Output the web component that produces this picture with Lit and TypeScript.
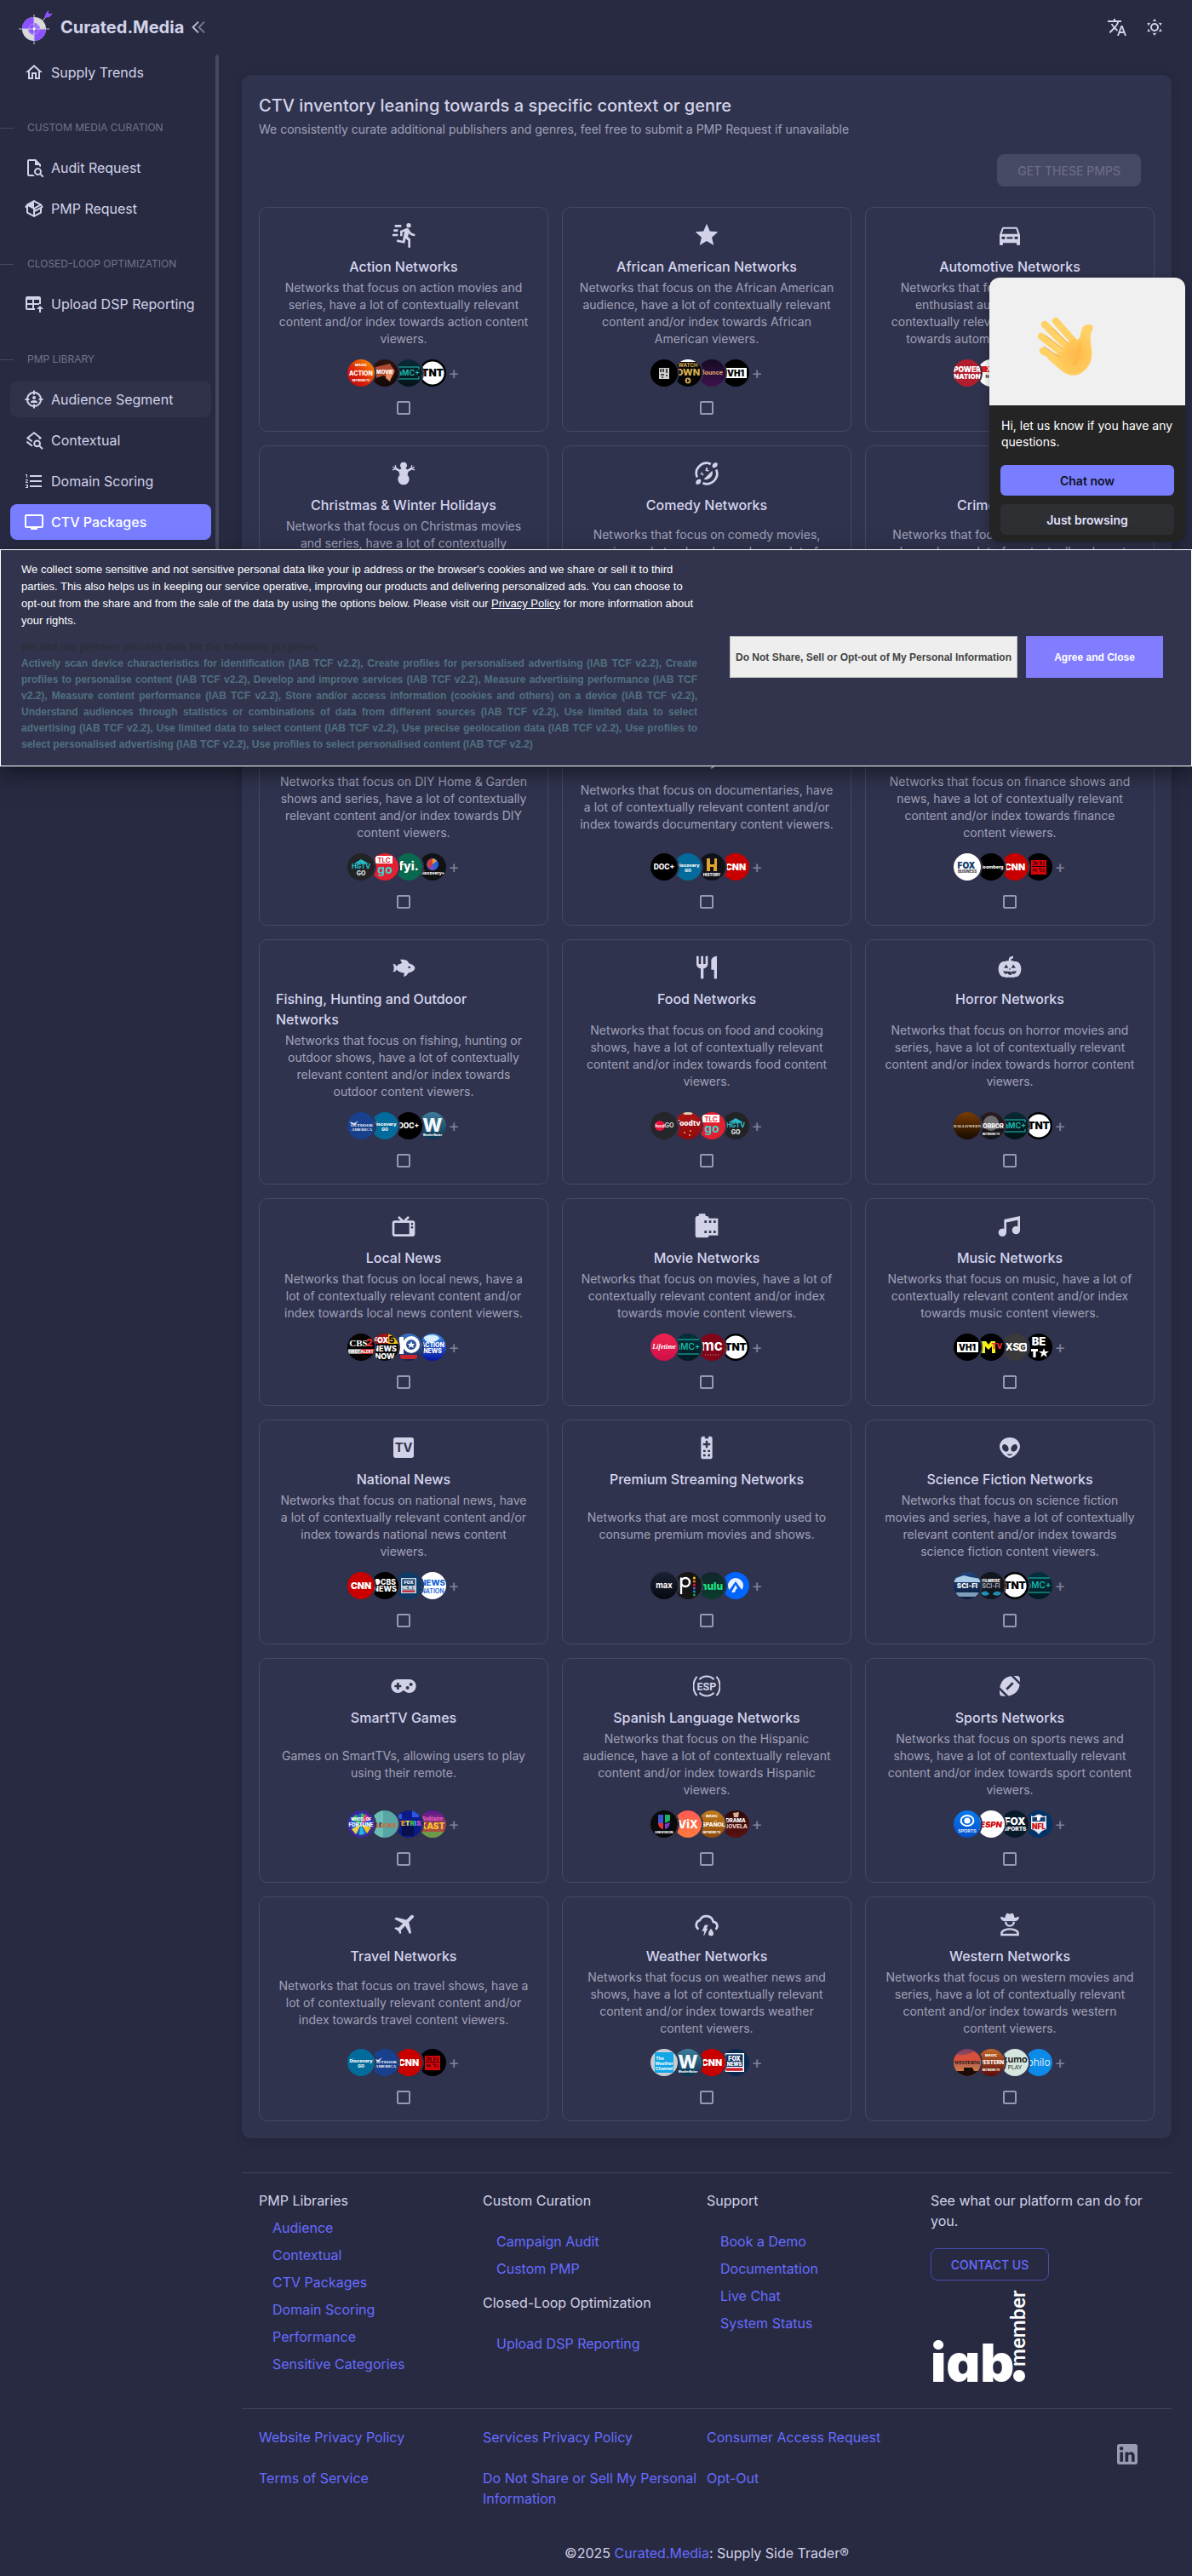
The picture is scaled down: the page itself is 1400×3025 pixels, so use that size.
import { LitElement, html, svg, css, type TemplateResult, type SVGTemplateResult } from "lit";
import { customElement, property } from "lit/decorators.js";
import { classMap } from "lit/directives/class-map.js";

type Art = SVGTemplateResult;

/* ---------- icons, all on a 24-unit grid ---------- */

const ICONS: Record<string, Art> = {
  home: svg`<path d="M12 5.69L17 10.19V18H15V12H9V18H7V10.19L12 5.69M12 3L2 12H5V20H11V14H13V20H19V12H22L12 3Z"/>`,
  audit: svg`<path d="M14,2H6A2,2 0 0,0 4,4V20A2,2 0 0,0 6,22H13C12.59,21.75 12.2,21.44 11.86,21.1C11.53,20.77 11.25,20.4 11,20H6V4H13V9H18V10.18C18.71,10.34 19.39,10.61 20,11V8L14,2M20.31,18.9C21.64,16.79 21,14 18.91,12.68C16.8,11.35 14,12 12.69,14.08C11.35,16.19 12,18.97 14.09,20.3C15.55,21.23 17.41,21.23 18.88,20.32L22,23.39L23.39,22L20.31,18.9M16.5,19A2.5,2.5 0 0,1 14,16.5A2.5,2.5 0 0,1 16.5,14A2.5,2.5 0 0,1 19,16.5A2.5,2.5 0 0,1 16.5,19Z"/>`,
  box: svg`<path d="M2,10.96C1.5,10.68 1.35,10.07 1.63,9.59L3.13,7C3.24,6.8 3.41,6.66 3.6,6.58L11.43,2.18C11.59,2.06 11.79,2 12,2C12.21,2 12.41,2.06 12.57,2.18L20.47,6.62C20.66,6.72 20.82,6.88 20.91,7.08L22.36,9.6C22.64,10.08 22.47,10.69 22,10.96L21,11.54V16.5C21,16.88 20.79,17.21 20.47,17.38L12.57,21.82C12.41,21.94 12.21,22 12,22C11.79,22 11.59,21.94 11.43,21.82L3.53,17.38C3.21,17.21 3,16.88 3,16.5V10.96C2.7,11.13 2.32,11.14 2,10.96M12,4.15V10.85L17.96,7.5L12,4.15M5,15.91L11,19.29V12.58L5,9.21V15.91M19,15.91V12.69L14,15.59C13.67,15.77 13.3,15.76 13,15.6V19.29L19,15.91M13.85,13.36L20.13,9.73L19.55,8.72L13.27,12.35L13.85,13.36Z"/>`,
  tableUp: svg`<path d="M4 3H18A2 2 0 0 1 20 5V12.2A6 6 0 0 0 18 12V13H12V17H13.1A6 6 0 0 0 13.1 19H4A2 2 0 0 1 2 17V5A2 2 0 0 1 4 3M4 7V11H10V7H4M12 7V11H18V7H12M4 13V17H10V13H4Z"/><path d="M19 14L23 18H20V22H18V18H15Z"/>`,
  target: svg`<path d="M20.95,11H22.5V13H20.95C20.5,17.17 17.17,20.5 13,20.95V22.5H11V20.95C6.83,20.5 3.5,17.17 3.05,13H1.5V11H3.05C3.5,6.83 6.83,3.5 11,3.05V1.5H13V3.05C17.17,3.5 20.5,6.83 20.95,11M5.07,11H6.5V13H5.07C5.5,16.07 7.93,18.5 11,18.93V17.5H13V18.93C16.07,18.5 18.5,16.07 18.93,13H17.5V11H18.93C18.5,7.93 16.07,5.5 13,5.07V6.5H11V5.07C7.93,5.5 5.5,7.93 5.07,11M16,16H8V15C8,13.67 10.67,13 12,13C13.33,13 16,13.67 16,15V16M12,8A2,2 0 0,1 14,10A2,2 0 0,1 12,12A2,2 0 0,1 10,10A2,2 0 0,1 12,8Z"/>`,
  layers: svg`<g fill="none" stroke="currentColor" stroke-width="2"><path d="M9.6 13.4L4.4 9.2L12 3.3L19.6 9.2L18 10.5"/><path d="M3.4 13.6L10 18.8"/><circle cx="15.6" cy="15.8" r="3.4"/><path d="M18 18.3L22 22.2"/></g>`,
  numbers: svg`<path d="M7,13V11H21V13H7M7,19V17H21V19H7M7,7V5H21V7H7M3,8V5H2V4H4V8H3M2,17V16H5V20H2V19H4V18.5H3V17.5H4V17H2M4.25,10A0.75,0.75 0 0,1 5,10.75C5,10.95 4.92,11.14 4.79,11.27L3.12,13H5V14H2V13.08L4,11H2V10H4.25Z"/>`,
  tv: svg`<path d="M21,17H3V5H21M21,3H3A2,2 0 0,0 1,5V17A2,2 0 0,0 3,19H8V21H16V19H21A2,2 0 0,0 23,17V5A2,2 0 0,0 21,3Z"/>`,
  translate: svg`<path d="M12.87,15.07L10.33,12.56L10.36,12.53C12.1,10.59 13.34,8.36 14.07,6H17V4H10V2H8V4H1V6H12.17C11.5,7.92 10.44,9.75 9,11.35C8.07,10.32 7.3,9.19 6.69,8H4.69C5.42,9.63 6.42,11.17 7.67,12.56L2.58,17.58L4,19L9,14L12.11,17.11L12.87,15.07M18.5,10H16.5L12,22H14L15.12,19H19.87L21,22H23L18.5,10M15.88,17L17.5,12.67L19.12,17H15.88Z"/>`,
  sun: svg`<path d="M12,7A5,5 0 0,1 17,12A5,5 0 0,1 12,17A5,5 0 0,1 7,12A5,5 0 0,1 12,7M12,9A3,3 0 0,0 9,12A3,3 0 0,0 12,15A3,3 0 0,0 15,12A3,3 0 0,0 12,9M12,2L14.39,5.42C13.65,5.15 12.84,5 12,5C11.16,5 10.35,5.15 9.61,5.42L12,2M3.34,7L7.5,6.65C6.9,7.16 6.36,7.78 5.94,8.5C5.5,9.24 5.25,10 5.11,10.79L3.34,7M3.36,17L5.12,13.23C5.26,14 5.53,14.78 5.95,15.5C6.37,16.24 6.91,16.86 7.5,17.37L3.36,17M20.65,7L18.88,10.79C18.74,10 18.47,9.23 18.05,8.5C17.63,7.78 17.1,7.15 16.5,6.64L20.65,7M20.64,17L16.5,17.36C17.09,16.85 17.62,16.22 18.04,15.5C18.46,14.77 18.73,14 18.87,13.21L20.64,17M12,22L9.59,18.56C10.33,18.83 11.14,19 12,19C12.82,19 13.63,18.83 14.37,18.56L12,22Z"/>`,
  chevrons: svg`<g fill="none" stroke="currentColor" stroke-width="2"><path d="M12 5.6L5.6 12L12 18.4"/><path d="M19 5.6L12.6 12L19 18.4" opacity=".55"/></g>`,
  run: svg`<path d="M16.5,5.5A2,2 0 0,0 18.5,3.5A2,2 0 0,0 16.5,1.5A2,2 0 0,0 14.5,3.5A2,2 0 0,0 16.5,5.5M12.9,19.4L13.9,15L16,17V23H18V15.5L15.9,13.5L16.5,10.5C17.89,12.09 19.89,13 22,13V11C20.24,11.03 18.6,10.11 17.7,8.6L16.7,7C16.34,6.4 15.7,6 15,6C14.7,6 14.5,6.1 14.2,6.1L9,8.3V13H11V9.6L12.8,8.9L11.2,17L6.3,16L5.9,18L12.9,19.4M4,9A1,1 0 0,1 3,8A1,1 0 0,1 4,7H7V9H4M5,5A1,1 0 0,1 4,4A1,1 0 0,1 5,3H10V5H5M3,13A1,1 0 0,1 2,12A1,1 0 0,1 3,11H7V13H3Z"/>`,
  star: svg`<path d="M12,17.27L18.18,21L16.54,13.97L22,9.24L14.81,8.62L12,2L9.19,8.62L2,9.24L7.45,13.97L5.82,21L12,17.27Z"/>`,
  car: svg`<path fill-rule="evenodd" d="M5,11L6.5,6.5H17.5L19,11M8 14.5A1.2 1.2 0 0 1 6.8 15.7H5.9A1.2 1.2 0 0 1 5.9 13.3H6.8A1.2 1.2 0 0 1 8 14.5M19.3 14.5A1.2 1.2 0 0 1 18.1 15.7H17.2A1.2 1.2 0 0 1 17.2 13.3H18.1A1.2 1.2 0 0 1 19.3 14.5M9.4 13.6H14.6V15.4H9.4M18.92,6C18.72,5.42 18.16,5 17.5,5H6.5C5.84,5 5.28,5.42 5.08,6L3,12V20A1,1 0 0,0 4,21H5A1,1 0 0,0 6,20V19H18V20A1,1 0 0,0 19,21H20A1,1 0 0,0 21,20V12L18.92,6Z"/>`,
  snowman: svg`<path d="M17,17A5,5 0 0,1 12,22A5,5 0 0,1 7,17C7,15.5 7.65,14.17 8.69,13.25C8.26,12.61 8,11.83 8,11V10.59L5.04,8.87L4.83,8.71L2.29,9.39L2.03,8.43L4.24,7.84L2.26,6.69L2.76,5.82L4.74,6.97L4.15,4.75L5.11,4.5L5.8,7.04L6.04,7.14L8.73,8.69C9.11,8.15 9.62,7.71 10.22,7.42C9.5,6.87 9,6 9,5A3,3 0 0,1 12,2A3,3 0 0,1 15,5C15,6 14.5,6.87 13.78,7.42C14.38,7.71 14.89,8.15 15.27,8.69L17.96,7.14L18.2,7.04L18.89,4.5L19.85,4.75L19.26,6.97L21.24,5.82L21.74,6.69L19.76,7.84L21.97,8.43L21.71,9.39L19.17,8.71L18.96,8.87L16,10.59V11C16,11.83 15.74,12.61 15.31,13.25C16.35,14.17 17,15.5 17,17Z"/>`,
  laugh: svg`<g fill="none" stroke="currentColor" stroke-width="2"><path d="M3.6 15.4A9 9 0 0 1 15.6 3.7M20.4 8.6A9 9 0 0 1 8.6 20.4"/></g><path d="M16.9 9.6A6 6 0 0 1 9.4 17.1ZM17.2 6.8C16.6 4.6 17.6 2.6 20 2.4C21.2 2.4 21.7 3 21.6 4C21.4 6.4 19.4 7.4 17.2 6.8M6.8 17.2C4.6 16.6 2.6 17.6 2.4 20C2.4 21.2 3 21.7 4 21.6C6.4 21.4 7.4 19.4 6.8 17.2M6.5 13L6.9 11.2L8.7 10.8L7.4 12L9.4 12.4L8.6 14.2L8 13ZM11.6 6.6L13 7.4L12.6 9.2L14.4 9L13.2 10.4L10.8 9.6Z"/>`,
  shield: svg`<path d="M12 2L20 5V11C20 16.2 16.6 20.6 12 22C7.4 20.6 4 16.2 4 11V5Z"/>`,
  hammer: svg`<path d="M3 8L9 3H15L14 6L12 7L21 18L18 21L8 11L6 12Z"/>`,
  camera: svg`<path d="M3 6H15A1 1 0 0 1 16 7V10L21 6V18L16 14V17A1 1 0 0 1 15 18H3A1 1 0 0 1 2 17V7A1 1 0 0 1 3 6Z"/>`,
  chart: svg`<path d="M4 19H20V21H4ZM5 11H8V17H5ZM10.5 7H13.5V17H10.5ZM16 3H19V17H16Z"/>`,
  fish: svg`<path d="M12,20L12.76,17C9.5,16.79 6.59,15.4 5.75,13.58C5.66,14.06 5.53,14.5 5.33,14.83C4.67,16 3.33,16 2,16C3.1,16 3.5,14.43 3.5,12.5C3.5,10.57 3.1,9 2,9C3.33,9 4.67,9 5.33,10.17C5.53,10.5 5.66,10.94 5.75,11.42C6.4,10 8.32,8.85 10.66,8.32L9,5C11,5 13,5 14.33,5.67C15.46,6.23 16.11,7.27 16.69,8.38C19.61,9.08 22,10.66 22,12.5C22,14.38 19.5,16 16.5,16.66C15.67,17.76 14.86,18.78 14.17,19.33C13.33,20 12.67,20 12,20M17,11A1,1 0 0,0 16,12A1,1 0 0,0 17,13A1,1 0 0,0 18,12A1,1 0 0,0 17,11Z"/>`,
  food: svg`<path d="M11,9H9V2H7V9H5V2H3V9C3,11.12 4.66,12.84 6.75,12.97V22H9.25V12.97C11.34,12.84 13,11.12 13,9V2H11V9M16,6V14H18.5V22H21V2C18.24,2 16,4.24 16,6Z"/>`,
  pumpkin: svg`<path fill-rule="evenodd" d="M11 6.2C11.1 4.6 11.1 3.4 12.4 2.6L15 2V4L13.2 4.5V6.2C14.2 6 15.4 6.2 16.4 6.8C19.6 6.2 22 9.4 22 13.4C22 17.6 19.8 20.8 16.6 20.4C15.4 21 14.2 21.1 13.2 20.7C12.4 21 11.4 21 10.8 20.7C9.8 21.1 8.6 21 7.4 20.4C4.2 20.8 2 17.6 2 13.4C2 9.4 4.4 6.2 7.6 6.8C8.8 6.2 10 6 11 6.2ZM9 9.4L6.8 12.6H10.6ZM15 9.4L13.4 12.6H17.2ZM12 12.4L11.2 13.9H12.8ZM6 14.6L7.2 17.2L9 18L9.8 16.8L11.2 18.5H13.4L14.4 17L15.6 18L17 17L18 14.6L16.2 15.6L14.6 15.2L13.4 16.4L11.6 15.4L10.4 15.8L9 15.2L8 15.8Z"/>`,
  tvClassic: svg`<path d="M8.16,3L6.75,4.41L9.34,7H4C2.89,7 2,7.89 2,9V19C2,20.11 2.89,21 4,21H20C21.11,21 22,20.11 22,19V9C22,7.89 21.11,7 20,7H14.66L17.25,4.41L15.84,3L12,6.84L8.16,3M4,9H17V19H4V9M19.5,9A1,1 0 0,1 20.5,10A1,1 0 0,1 19.5,11A1,1 0 0,1 18.5,10A1,1 0 0,1 19.5,9M19.5,12A1,1 0 0,1 20.5,13A1,1 0 0,1 19.5,14A1,1 0 0,1 18.5,13A1,1 0 0,1 19.5,12Z"/>`,
  film: svg`<path d="M14 5c0-1.1-.9-2-2-2h-1V2c0-.55-.45-1-1-1H6c-.55 0-1 .45-1 1v1H4c-1.1 0-2 .9-2 2v15c0 1.1.9 2 2 2h8c1.1 0 2-.9 2-2h8V5h-8zm-2 13h-2v-2h2v2zm0-9h-2V7h2v2zm4 9h-2v-2h2v2zm0-9h-2V7h2v2zm4 9h-2v-2h2v2zm0-9h-2V7h2v2z"/>`,
  music: svg`<path d="M21,3V15.5A3.5,3.5 0 0,1 17.5,19A3.5,3.5 0 0,1 14,15.5A3.5,3.5 0 0,1 17.5,12C18.04,12 18.55,12.12 19,12.34V6.47L9,8.6V17.5A3.5,3.5 0 0,1 5.5,21A3.5,3.5 0 0,1 2,17.5A3.5,3.5 0 0,1 5.5,14C6.04,14 6.55,14.12 7,14.34V6L21,3Z"/>`,
  tvBox: svg`<rect x="3" y="3" width="18" height="18" rx="2"/><text x="12" y="16" text-anchor="middle" font-family="Inter, sans-serif" font-weight="700" font-size="11" fill="#30334e">TV</text>`,
  remote: svg`<path fill-rule="evenodd" d="M9 2H10.4V4H13.6V2H15A2 2 0 0 1 17 4V20A2 2 0 0 1 15 22H9A2 2 0 0 1 7 20V4A2 2 0 0 1 9 2ZM11.1 5.8V8.1H8.8V9.9H11.1V12.2H12.9V9.9H15.2V8.1H12.9V5.8ZM9 14V15.8H11V14ZM13 14V15.8H15V14ZM9 17.8V19.6H11V17.8ZM13 17.8V19.6H15V17.8Z"/>`,
  alien: svg`<path d="M12,3C16.97,3 21,6.58 21,11C21,15.42 15,21 12,21C9,21 3,15.42 3,11C3,6.58 7.03,3 12,3M10.31,10.93C9.29,9.29 7.47,8.58 6.25,9.34C5.03,10.1 4.87,12.05 5.89,13.69C6.92,15.33 8.74,16.04 9.96,15.28C11.18,14.5 11.33,12.57 10.31,10.93M13.69,10.93C12.67,12.57 12.82,14.5 14.04,15.28C15.26,16.04 17.08,15.33 18.11,13.69C19.13,12.05 18.97,10.1 17.75,9.34C16.53,8.58 14.71,9.29 13.69,10.93M12,17.75C10,17.75 9.5,17 9.5,17C9.5,17.03 10,19 12,19C14,19 14.5,17 14.5,17C14.5,17 14,17.75 12,17.75Z"/>`,
  gamepad: svg`<path d="M7,6H17A6,6 0 0,1 23,12A6,6 0 0,1 17,18C15.22,18 13.63,17.23 12.53,16H11.47C10.37,17.23 8.78,18 7,18A6,6 0 0,1 1,12A6,6 0 0,1 7,6M6,9V11H4V13H6V15H8V13H10V11H8V9H6M15.5,12A1.5,1.5 0 0,0 14,13.5A1.5,1.5 0 0,0 15.5,15A1.5,1.5 0 0,0 17,13.5A1.5,1.5 0 0,0 15.5,12M18.5,9A1.5,1.5 0 0,0 17,10.5A1.5,1.5 0 0,0 18.5,12A1.5,1.5 0 0,0 20,10.5A1.5,1.5 0 0,0 18.5,9Z"/>`,
  esp: svg`<g fill="none" stroke="currentColor" stroke-width="1.5"><path d="M5.6 6.2A8.8 8.8 0 0 1 18.4 6.2M5.6 17.8A8.8 8.8 0 0 0 18.4 17.8"/><path d="M3.4 3.6A13 13 0 0 0 3.4 20.4M20.6 3.6A13 13 0 0 1 20.6 20.4"/></g><text x="12" y="15.4" text-anchor="middle" font-family="Roboto, sans-serif" font-weight="700" font-size="9.4">ESP</text>`,
  football: svg`<path d="M3.02 15.62c-.08 2.42.32 4.34.67 4.69s2.28.76 4.69.67l-5.36-5.36zM13.08 3.28C10.75 3.7 8.29 4.62 6.46 6.46s-2.76 4.29-3.18 6.62l7.63 7.63c2.34-.41 4.79-1.34 6.62-3.18s2.76-4.29 3.18-6.62l-7.63-7.63zM9.9 15.5l-1.4-1.4 5.6-5.6 1.4 1.4-5.6 5.6zM20.98 8.38c.08-2.42-.32-4.34-.67-4.69s-2.28-.76-4.69-.67l5.36 5.36z"/>`,
  plane: svg`<path d="M20.56 3.91C21.15 4.5 21.15 5.45 20.56 6.03L16.67 9.92L18.79 19.11L17.38 20.53L13.5 13.1L9.6 17L9.96 19.47L8.89 20.53L7.13 17.35L3.94 15.58L5 14.5L7.5 14.87L11.37 11L3.94 7.09L5.36 5.68L14.55 7.8L18.44 3.91C19 3.33 20 3.33 20.56 3.91Z"/>`,
  weather: svg`<path fill="none" stroke="currentColor" stroke-width="2" stroke-linecap="round" d="M4.2 15.6A4.3 4.3 0 0 1 5.9 8.3A6.3 6.3 0 0 1 17.8 9.6A3.6 3.6 0 0 1 20.4 15.6"/><path d="M10.4 12.4H13.4L11.8 15.6H13L9.2 22.6L9.9 17.8H7.8ZM15.8 15.6C17.2 17.4 18 18.6 18 19.8A2.2 2.2 0 0 1 13.6 19.8C13.6 18.6 14.4 17.4 15.8 15.6Z"/>`,
  cowboy: svg`<path d="M4 5C5.4 4.8 5.6 5.8 7.8 6C8.2 4 8.6 2 10.2 2C11 2 11.3 2.6 12 2.6C12.7 2.6 13 2 13.8 2C15.4 2 15.8 4 16.2 6C18.4 5.8 18.6 4.8 20 5C20.4 7.4 18.6 9 16 9H8C5.4 9 3.6 7.4 4 5Z"/><g fill="none" stroke="currentColor" stroke-width="1.8"><path d="M8.4 9.6A3.6 3.6 0 0 0 15.6 9.6"/><path d="M4.8 21V19.6C4.8 17.4 8.6 16 12 16C15.4 16 19.2 17.4 19.2 19.6V21Z"/></g>`,
  linkedin: svg`<path d="M19 3A2 2 0 0 1 21 5V19A2 2 0 0 1 19 21H5A2 2 0 0 1 3 19V5A2 2 0 0 1 5 3H19M18.5 18.5V13.2A3.26 3.26 0 0 0 15.24 9.94C14.39 9.94 13.4 10.46 12.92 11.24V10.13H10.13V18.5H12.92V13.57C12.92 12.8 13.54 12.17 14.31 12.17A1.4 1.4 0 0 1 15.71 13.57V18.5H18.5M6.88 8.56A1.68 1.68 0 0 0 8.56 6.88C8.56 5.95 7.81 5.19 6.88 5.19A1.69 1.69 0 0 0 5.19 6.88C5.19 7.81 5.95 8.56 6.88 8.56M8.27 18.5V10.13H5.5V18.5H8.27Z"/>`,
};

const icon = (name: string, cls = "icon"): TemplateResult =>
  html`<svg class=${cls} viewBox="0 0 24 24" fill="currentColor" aria-hidden="true">${ICONS[name]}</svg>`;

/* ---------- channel badges, 32-unit discs ---------- */

const SANS = "Inter, sans-serif";
const SERIF = "'Liberation Serif', serif";

const word = (s: string, y: number, size: number, fill = "#fff", weight = 800, x = 16, family = SANS): Art =>
  svg`<text x=${x} y=${y} font-size=${size} fill=${fill} font-weight=${weight} font-family=${family} text-anchor="middle">${s}</text>`;
const ground = (fill: string): Art => svg`<rect width="32" height="32" fill=${fill}/>`;
const blend = (id: string, a: string, b: string): Art =>
  svg`<linearGradient id=${id} x2="0" y2="1"><stop stop-color=${a}/><stop offset="1" stop-color=${b}/></linearGradient><rect width="32" height="32" fill=${`url(#${id})`}/>`;

const BADGES: Record<string, Art> = {
  action: svg`<linearGradient id="g" x1="1" x2="0" y2="1"><stop stop-color="#ff9a00"/><stop offset=".6" stop-color="#d8200c"/><stop offset="1" stop-color="#b8040c"/></linearGradient><rect width="32" height="32" fill="url(#g)"/>${word("MAGIC", 8, 4)}${word("ACTION", 19, 7)}${word("NETWORK TV", 26, 3)}`,
  action2: svg`${blend("g", "#2c1410", "#120806")}<path d="M5 9L22 5L28 14L24 22L14 19L6 22Z" fill="#b04a32"/><path d="M18 13L27 12L22 26L17 22Z" fill="#e88a5c"/>${word("MOVIE", 17, 6)}`,
  amc: svg`${blend("g", "#0a2a36", "#031218")}<path d="M2 9H28V12M2 23H28V20" fill="none" stroke="#1fc4b4"/>${word("aMC+", 19, 9, "#1fc4b4", 600)}`,
  tnt: svg`${ground("#000")}<circle cx="16" cy="16" r="13.6" fill="#fff"/>${word("TNT", 20, 12, "#000", 900)}`,
  square: svg`${ground("#000")}<rect x="10" y="10" width="12" height="13" fill="#cfcfcf"/><path d="M12 11V15M15 11V15M19 11V16M12 18H16M18 19H20M13 21H15" stroke="#222" stroke-width="1.6"/>`,
  own: svg`${ground("#050505")}<path d="M4 0H28V3H4Z" fill="#fff"/>${word("WATCH", 9, 6, "#c9a04a")}${word("OWN", 19, 11, "#d8b052")}<circle cx="16" cy="25" r="3.4" fill="#c9a04a"/><path d="M15 23V27L18 25Z" fill="#050505"/>`,
  bounce: svg`${blend("g", "#160a24", "#3d124e")}${word("Bounce", 18, 7, "#e0a868", 700)}`,
  vh1: svg`${ground("#000")}<rect x="4" y="10" width="25" height="12" fill="#fff"/>${word("VH1", 20, 10, "#000", 900)}`,
  power: svg`${ground("#b01e2e")}${word("POWER", 15, 8.6, "#fff", 900)}${word("NATION", 22.6, 8, "#fff", 900)}`,
  motor: svg`${ground("#fff")}<rect x="2" y="8" width="28" height="7" fill="#d22"/>${word("XO", 14, 7)}${word("NOW", 22, 5, "#333")}`,
  hgtv: svg`${ground("#222325")}<path d="M8 12L16 7L25 12Z" fill="#27b8c6"/>${word("HGTV", 18, 7.6, "#27b8c6")}${word("GO", 26, 7, "#dfe6e8")}`,
  tlc: svg`${ground("#e3202f")}<rect x="5" y="3" width="20" height="9" fill="#fff"/>${word("TLC", 11, 8, "#e3202f", 600, 15)}${word("go", 24, 14, "#3fd0cf", 700)}`,
  fyi: svg`${ground("#08694f")}${word("fyi.", 20, 14)}`,
  discPlus: svg`${ground("#111216")}<circle cx="16" cy="13" r="7" fill="#2563d8"/><path d="M16 6A7 7 0 0 0 12 18L16 13Z" fill="#d83a3a"/><path d="M16 6A7 7 0 0 1 21 9L16 13Z" fill="#e7a13a"/><path d="M12 18A7 7 0 0 0 19 19L16 13Z" fill="#7a49c9"/>${word("discovery+", 24.6, 5)}`,
  doc: svg`${ground("#000")}${word("DOC+", 19, 8.4)}`,
  discovery: svg`${ground("#036b9b")}${word("Discovery", 16, 5.4)}${word("GO", 21.6, 5)}`,
  history: svg`${ground("#10121a")}<path d="M10 6H14V13H19V6H22V21H18V16H14V21H10Z" fill="#e2a32c"/>${word("HISTORY", 27, 4.6)}`,
  cnn: svg`${ground("#c90000")}${word("CNN", 20, 10.6, "#fff", 900)}`,
  foxBiz: svg`${ground("#fff")}${word("FOX", 18, 10, "#143a6b", 900, 15)}${word("BUSINESS", 23, 4.4, "#444")}`,
  bloomberg: svg`${ground("#000")}${word("Bloomberg", 18, 5.4)}`,
  redGlyph: svg`${ground("#000")}<rect x="7" y="8" width="18" height="17" fill="#d8040c"/><path d="M9 10H12V13H9M14 10V14M17 10H19V13H17M22 10V14M8 15.5H24M10 18V21L13 18V22M16 18H19V22M22 18V22" fill="none" stroke="#200"/>`,
  outdoor: svg`${ground("#19408c")}<path d="M2 11L8 13L13 10L9 15L5 14Z" fill="#dfe6f5"/>${word("OUTDOOR", 17, 5, "#fff", 800, 17, SERIF)}${word("AMERICA", 22, 5, "#fff", 800, 17, SERIF)}`,
  weatherNation: svg`${blend("g", "#3e7d9c", "#0a3450")}${word("W", 23, 22, "#f2f8fc", 800)}${word("WeatherNation", 28, 3)}`,
  foodGo: svg`${ground("#25262a")}<circle cx="11" cy="16" r="6" fill="#e5103a"/>${word("food", 18, 5, "#fff", 700, 11)}${word("GO", 18.4, 7, "#e8e8ec", 600, 22)}`,
  foodTV: svg`${blend("g", "#b01414", "#8c0a0e")}<path d="M9 0H23L20 3H12Z" fill="#d9d0b8"/><circle cx="12" cy="24" r="1" fill="#f0a070"/><circle cx="19" cy="22" r="1" fill="#f0a070"/><circle cx="18" cy="27" r="1" fill="#f0a070"/>${word("Foodtv", 16, 8.4)}`,
  halloween: svg`${blend("g", "#7a3c04", "#150a02")}${word("HALLOWEEN", 18, 5, "#f0e6d8", 800, 16, SERIF)}`,
  horror: svg`${blend("g", "#2a1c20", "#131317")}<circle cx="16" cy="13" r="9" fill="#6d6b70"/>${word("HORROR", 19, 7)}${word("NETWORK TV", 27, 3)}`,
  cbs2: svg`${ground("#050303")}${word("CBS", 15, 11, "#fff", 700, 13, SERIF)}${word("2", 15, 12, "#e23232", 900, 26)}<rect x="1" y="18" width="15" height="6" fill="#8d8d8d"/><rect x="16" y="18" width="15" height="6" fill="#c9201c"/>${word("FIRST ALERT", 23, 4.6)}`,
  fox5: svg`${ground("#0a0a0a")}<rect width="32" height="12" fill="#9c1616"/><rect x="20" width="12" height="12" fill="#f2c018"/>${word("FOX", 10.6, 9, "#fff", 900, 11)}${word("5", 11, 11, "#111", 900, 24)}${word("NEWS", 21, 9)}${word("NOW", 30, 9)}`,
  ten: svg`${blend("g", "#3a74c4", "#16224f")}<rect x="5" y="4" width="5" height="20" fill="#fff"/><circle cx="19" cy="13" r="8" fill="none" stroke="#fff" stroke-width="4"/><path d="M19 9L20.3 12H23.4L21 14L22 17L19 15.2L16 17L17 14L14.6 12H17.7Z" fill="#fff"/><rect x="6" y="25" width="20" height="5" fill="#c9242c"/>`,
  actionNews: svg`${blend("g", "#3f8be0", "#0414a4")}<path d="M6 4C14 -1 24 2 24 6C18 12 6 12 6 4Z" fill="#d8ecff"/>${word("ACTION", 16, 7)}${word("NEWS", 23, 7)}`,
  lifetime: svg`${blend("g", "#f0224e", "#d0104a")}<text x="16" y="18" font-size="8" fill="#fff" font-weight="700" font-style="italic" font-family=${SERIF} text-anchor="middle">Lifetime</text>`,
  amcLine: svg`${blend("g", "#04303a", "#021a24")}<path d="M3 7H29M3 24H29" stroke="#1fc4b4"/>${word("aMC+", 19, 10, "#1fc4b4", 500)}`,
  mc: svg`${ground("#80041a")}${word("mc", 20, 17, "#fff", 700)}<path d="M8 25H24" stroke="#d98" stroke-dasharray="1 2"/>`,
  mtv: svg`${ground("#000")}<path d="M5 9H10L13 13L16 9H21V23H17V15L13 19L9 15V23H5Z" fill="#f6f013"/><path d="M5 9V23" stroke="#1fb6e8"/>${word("TV", 18, 9, "#f22c3c", 800, 23)}`,
  xs: svg`${ground("#3a3a3b")}${word("XS", 20, 12, "#fff", 800, 13)}<rect x="21" y="11" width="9" height="10" rx="2" fill="#fff"/>${word("G", 19, 8, "#333", 900, 25.6)}`,
  bet: svg`${ground("#000")}${word("BE", 14, 13, "#fff", 900)}<path d="M7 18H15V21H12.6V28H9.4V21H7Z" fill="#fff"/><path d="M22 17L23.4 21H28L24.4 23.4L25.6 28L22 25L18.4 28L19.6 23.4L16 21H20.6Z" fill="#fff"/>`,
  cbsNews: svg`${ground("#000")}${word("●CBS", 15, 8.6)}${word("NEWS", 23.4, 9)}`,
  foxNews: svg`${ground("#103a66")}<rect x="7" y="7" width="18" height="18" fill="#c9d6e4"/><rect x="8.4" y="8.4" width="15" height="12" fill="#18406c"/>${word("FOX", 14, 5.4)}${word("NEWS", 19.6, 5)}<rect x="8.4" y="21.4" width="15" height="2.4" fill="#c02838"/>`,
  newsNation: svg`${ground("#fff")}${word("NEWS", 16, 9.6, "#1764d8")}${word("NATION", 24.6, 7, "#1764d8", 600)}`,
  max: svg`${blend("g", "#1a2233", "#05080f")}${word("max", 19, 9.4, "#fff", 700)}`,
  peacock: svg`${ground("#151515")}<path d="M8 26V6.6" stroke="#fff" stroke-width="2.4"/><circle cx="13" cy="12" r="5" fill="none" stroke="#fff" stroke-width="2.4"/><g><circle cx="23.4" cy="7" r="1.5" fill="#fccc12"/><circle cx="23.4" cy="11" r="1.5" fill="#ff7112"/><circle cx="23.4" cy="15" r="1.5" fill="#ef1541"/><circle cx="23.4" cy="19" r="1.5" fill="#6e55dc"/><circle cx="23.4" cy="23" r="1.5" fill="#069de0"/><circle cx="23.4" cy="27" r="1.5" fill="#05ac3f"/></g>`,
  hulu: svg`${blend("g", "#12262a", "#0b3b2e")}${word("hulu", 21, 12, "#1ce783", 800)}`,
  paramount: svg`${ground("#0064ff")}<circle cx="16" cy="16" r="9" fill="#e8f0ff"/><path d="M8 22L16 11L24 22V26H8Z" fill="#0064ff"/><path d="M11 24L16 15L18 19L16 21L15 24Z" fill="#e8f0ff"/>`,
  scifi: svg`${blend("g", "#20427c", "#0a1d3a")}<path d="M0 8L12 4L20 6L32 8V12H0Z" fill="#a8cbe8"/><path d="M3 24H29V29H3Z" fill="#7f9dbb"/>${word("SCI-FI", 19, 8)}`,
  scifi2: svg`${ground("#14161e")}<path d="M4 25C8 21 12 22 14 26C10 29 6 28 4 25M18 26C20 22 25 22 28 25C26 28 22 29 18 26" fill="#1f8fb5"/>${word("FILMRISE", 12, 4.6)}${word("SCI-FI", 19, 7, "#9aa0ae")}`,
  wheel: svg`${ground("#3a2a9a")}<circle cx="16" cy="16" r="12" fill="#1d64d0"/><path d="M16 16L4 10L10 5ZM16 16L16 3L21 5Z" fill="#35c04a"/><path d="M16 16L21 4L28 10Z" fill="#d83a8a"/><path d="M16 16L28 20L23 27Z" fill="#f2c41f"/><path d="M16 16L10 28L5 22Z" fill="#f2d33f"/><path d="M16 16L14 29L20 28Z" fill="#22c0d8"/>${word("WHEEL OF", 12.4, 4.6)}${word("FORTUNE", 19, 6)}`,
  block: svg`${ground("#58a6a4")}<rect width="14" height="32" fill="#6cbcb8"/><path d="M3 14H7V20H3M9 14H12V20H9" fill="#356b69"/>${word("BLOCKS", 20, 6.6, "#d8642a")}`,
  tetris: svg`${ground("#0b1c8a")}<rect x="2" y="4" width="6" height="6" fill="#2b56e0"/><rect x="20" y="0" width="8" height="8" fill="#2b56e0"/><rect x="8" y="18" width="14" height="12" fill="#08104e"/><text x="16" y="18" font-size="8" font-weight="900" font-family=${SANS} text-anchor="middle"><tspan fill="#e23c2c">T</tspan><tspan fill="#f0a020">E</tspan><tspan fill="#e8e040">T</tspan><tspan fill="#45c040">R</tspan><tspan fill="#30b0e8">I</tspan><tspan fill="#c848d0">S</tspan></text>`,
  jackpot: svg`${blend("g", "#5a149a", "#c8641e")}${word("Solitaire", 12, 6, "#e25ac8")}${word("KAST", 22, 10, "#f8c02a", 900)}<rect y="25" width="32" height="7" fill="#6c9a4c"/>`,
  univision: svg`${ground("#0a0a0a")}<path d="M9 5H15V15H9Z" fill="#3a56d0"/><path d="M17 5H23V12L17 15Z" fill="#17b36a"/><path d="M9 15V16Q10 21 15 22V15Z" fill="#e8303c"/><path d="M17 22Q22 21 23 14L17 16Z" fill="#7a3ad0"/>${word("UNIVISION", 27, 4)}`,
  vix: svg`${blend("g", "#ff5a52", "#ff7a3c")}${word("ViX", 21, 13)}`,
  espanol: svg`${blend("g", "#c47a1c", "#8c4a0c")}${word("MAGIC", 8, 4)}${word("ESPAÑOL", 19, 6.6)}${word("NETWORK TV", 27, 3)}`,
  novela: svg`${blend("g", "#2c0a0a", "#5c1010")}<path d="M13 3L20 2L19 8H14Z" fill="#d8b090"/>${word("DRAMA", 14, 6)}${word("NOVELA", 21, 6.6, "#e8c8c0")}`,
  cbsSports: svg`${blend("g", "#0a7af0", "#0450c8")}<ellipse cx="16" cy="12" rx="7.4" ry="6" fill="none" stroke="#fff" stroke-width="2"/><circle cx="16" cy="12" r="3.6" fill="#fff"/>${word("SPORTS", 26, 5.4, "#fff", 600)}`,
  espn: svg`${ground("#fff")}<text x="16" y="19.6" font-size="9.6" fill="#d00a10" font-weight="900" font-style="italic" font-family=${SANS} text-anchor="middle">ESPN</text>`,
  foxSports: svg`${ground("#071a2c")}${word("FOX", 17, 12, "#fff", 900)}${word("SPORTS", 24, 6.6)}`,
  nfl: svg`${ground("#013369")}<path d="M7 6Q10 8 12 6Q16 3 20 6Q22 8 25 6V22Q20 23 16 28Q12 23 7 22Z" fill="#e4e8ef"/><path d="M8.4 8H23.6V13H8.4Z" fill="#1b3f74"/><path d="M14 7L19 6L17 12H14Z" fill="#fff"/>${word("NFL", 21.6, 8.4, "#d50a0a", 900)}`,
  weatherCh: svg`${ground("#c9ccd0")}<rect x="5" y="4" width="22" height="24" fill="#10a6e8"/>${word("The", 13, 5, "#fff", 700, 11)}${word("Weather", 19, 5, "#fff", 700)}${word("Channel", 25, 5, "#fff", 700)}`,
  foxNews2: svg`${ground("#0a2a52")}<rect x="3" y="5" width="23" height="22" fill="#fff"/><rect x="4.4" y="6.4" width="20" height="14.6" fill="#0e3462"/>${word("FOX", 13.6, 7, "#fff", 900, 14.6)}${word("NEWS", 20, 5.6, "#fff", 900, 14.6)}<rect x="4.4" y="22.4" width="20" height="3.4" fill="#c41c2c"/>`,
  westerns: svg`${blend("g", "#7c3c64", "#e8863c")}<path d="M0 6Q12 10 24 3L32 8V14H0Z" fill="#d8503c"/><path d="M0 26H32V32H0M12 22H22L24 26H12Z" fill="#1c0c08"/>${word("WESTERNS", 18, 5.4, "#200c08", 900, 16, SERIF)}`,
  western2: svg`${blend("g", "#c4692c", "#5c0c08")}${word("MAGIC", 9, 4)}${word("WESTERN", 18.4, 6)}${word("NETWORK TV", 26, 3)}`,
  xumo: svg`${ground("#d4e6de")}${word("xumo", 16, 11, "#0c0c0c", 600)}${word("PLAY", 23.6, 6.6, "#222", 400)}`,
  philo: svg`${ground("#0c8ae8")}${word("philo", 20, 12, "#fff", 300)}`,
};

/* ---------- data ---------- */

interface Pack {
  title: string;
  icon: string;
  text: string;
  badges: string[];
}

const focus = (a: string, b: string) =>
  `Networks that focus on ${a}, have a lot of contextually relevant content and/or index towards ${b} viewers.`;

const PACKS: Pack[] = [
  { title: "Action Networks", icon: "run", text: focus("action movies and series", "action content"), badges: ["action", "action2", "amc", "tnt"] },
  { title: "African American Networks", icon: "star", text: focus("the African American audience", "African American"), badges: ["square", "own", "bounce", "vh1"] },
  { title: "Automotive Networks", icon: "car", text: focus("the automotive enthusiast audience", "automotive content"), badges: ["power", "motor", "tnt", "cnn"] },
  {
    title: "Christmas & Winter Holidays",
    icon: "snowman",
    text: "Networks that focus on Christmas movies and series, have a lot of contextually relevant\u00a0content and/or index towards Christmas and Winter Holiday themed content viewers.",
    badges: ["paramount", "square", "redGlyph", "ten"],
  },
  { title: "Comedy Networks", icon: "laugh", text: focus("comedy movies, series and standup shows", "comedy content"), badges: ["square", "paramount", "ten", "redGlyph"] },
  { title: "Crime Networks", icon: "shield", text: focus("crime movies and shows", "crime content"), badges: ["redGlyph", "square", "paramount", "ten"] },
  { title: "DIY Home & Garden", icon: "hammer", text: focus("DIY Home & Garden shows and series", "DIY content"), badges: ["hgtv", "tlc", "fyi", "discPlus"] },
  { title: "Documentary Networks", icon: "camera", text: focus("documentaries", "documentary content"), badges: ["doc", "discovery", "history", "cnn"] },
  { title: "Finance Networks", icon: "chart", text: focus("finance shows and news", "finance content"), badges: ["foxBiz", "bloomberg", "cnn", "redGlyph"] },
  { title: "Fishing, Hunting and Outdoor Networks", icon: "fish", text: focus("fishing, hunting or outdoor shows", "outdoor content"), badges: ["outdoor", "discovery", "doc", "weatherNation"] },
  { title: "Food Networks", icon: "food", text: focus("food and cooking shows", "food content"), badges: ["foodGo", "foodTV", "tlc", "hgtv"] },
  { title: "Horror Networks", icon: "pumpkin", text: focus("horror movies and series", "horror content"), badges: ["halloween", "horror", "amc", "tnt"] },
  { title: "Local News", icon: "tvClassic", text: focus("local news", "local news content"), badges: ["cbs2", "fox5", "ten", "actionNews"] },
  { title: "Movie Networks", icon: "film", text: focus("movies", "movie content"), badges: ["lifetime", "amcLine", "mc", "tnt"] },
  { title: "Music Networks", icon: "music", text: focus("music", "music content"), badges: ["vh1", "mtv", "xs", "bet"] },
  { title: "National News", icon: "tvBox", text: focus("national news", "national news content"), badges: ["cnn", "cbsNews", "foxNews", "newsNation"] },
  { title: "Premium Streaming Networks", icon: "remote", text: "Networks that are most commonly used to consume premium movies and shows.", badges: ["max", "peacock", "hulu", "paramount"] },
  { title: "Science Fiction Networks", icon: "alien", text: focus("science fiction movies and series", "science fiction content"), badges: ["scifi", "scifi2", "tnt", "amcLine"] },
  { title: "SmartTV Games", icon: "gamepad", text: "Games on SmartTVs, allowing users to play using their remote.", badges: ["wheel", "block", "tetris", "jackpot"] },
  { title: "Spanish Language Networks", icon: "esp", text: focus("the Hispanic audience", "Hispanic"), badges: ["univision", "vix", "espanol", "novela"] },
  { title: "Sports Networks", icon: "football", text: focus("sports news and shows", "sport content"), badges: ["cbsSports", "espn", "foxSports", "nfl"] },
  { title: "Travel Networks", icon: "plane", text: focus("travel shows", "travel content"), badges: ["discovery", "outdoor", "cnn", "redGlyph"] },
  { title: "Weather Networks", icon: "weather", text: focus("weather news and shows", "weather content"), badges: ["weatherCh", "weatherNation", "cnn", "foxNews2"] },
  { title: "Western Networks", icon: "cowboy", text: focus("western movies and series", "western content"), badges: ["westerns", "western2", "xumo", "philo"] },
];

interface NavItem {
  label: string;
  icon: string;
  state?: "hover" | "active";
}

const NAV: { heading?: string; items: NavItem[] }[] = [
  { items: [{ label: "Supply Trends", icon: "home" }] },
  { heading: "Custom Media Curation", items: [{ label: "Audit Request", icon: "audit" }, { label: "PMP Request", icon: "box" }] },
  { heading: "Closed-Loop Optimization", items: [{ label: "Upload DSP Reporting", icon: "tableUp" }] },
  {
    heading: "PMP Library",
    items: [
      { label: "Audience Segment", icon: "target", state: "hover" },
      { label: "Contextual", icon: "layers" },
      { label: "Domain Scoring", icon: "numbers" },
      { label: "CTV Packages", icon: "tv", state: "active" },
    ],
  },
];

/* ---------- channel badge ---------- */

@customElement("channel-badge")
class ChannelBadge extends LitElement {
  @property() name = "";

  static styles = css`
    :host { display: block; width: 32px; height: 32px; border-radius: 50%; box-shadow: 0 0 0 2px #30334e; }
    svg { display: block; width: 32px; height: 32px; border-radius: 50%; }
  `;

  render() {
    return html`<svg viewBox="0 0 32 32" aria-hidden="true">${BADGES[this.name]}</svg>`;
  }
}

/* ---------- package card ---------- */

@customElement("package-card")
class PackageCard extends LitElement {
  @property({ attribute: false }) pack!: Pack;

  static styles = css`
    :host {
      display: flex; flex-direction: column; align-items: center; box-sizing: border-box;
      border: 1px solid #464963; border-radius: 10px; padding: 16px 19px 18px;
    }
    .icon { width: 32px; height: 32px; color: #d2d2e8; }
    h3 { margin: 9px 0 3px; font-size: 16px; line-height: 24px; font-weight: 500; color: #d6d6ee; }
    .text { flex: 1; display: flex; align-items: center; }
    p { margin: 0; font-size: 14px; line-height: 20px; color: #a0a1b8; text-align: center; }
    .channels { display: flex; align-items: center; margin-top: 14px; }
    .channels channel-badge + channel-badge { margin-left: -4px; }
    .channels channel-badge { position: relative; }
    .more { margin-left: 2px; font-size: 20px; line-height: 24px; color: #80819b; }
    input {
      appearance: none; width: 16px; height: 16px; margin: 17px 0 1px; box-sizing: border-box;
      border: 2px solid #9798b2; border-radius: 2px;
    }
    input:checked { background: #666cff; border-color: #666cff; }
  `;

  render() {
    const p = this.pack;
    return html`
      ${icon(p.icon)}
      <h3>${p.title}</h3>
      <div class="text"><p>${p.text}</p></div>
      <div class="channels">
        ${p.badges.map((b, i) => html`<channel-badge name=${b} style="z-index:${p.badges.length - i}"></channel-badge>`)}
        <span class="more">+</span>
      </div>
      <input type="checkbox" aria-label=${`Select ${p.title}`} />
    `;
  }
}

/* ---------- page ---------- */

@customElement("app-root")
class AppRoot extends LitElement {
  static styles = css`
    :host {
      display: block; position: relative; min-height: 100vh; background: #282a42; color: #d2d2e8;
      font-family: Inter, "Liberation Sans", sans-serif; font-size: 16px; line-height: 24px;
    }
    a { color: #666cff; text-decoration: none; }
    button { font-family: inherit; cursor: pointer; }
    .icon { width: 24px; height: 24px; flex: none; }

    .topbar { display: flex; align-items: center; height: 64px; padding: 0 32px 0 22px; }
    .brand { display: flex; align-items: center; gap: 9px; }
    .brand svg { width: 40px; height: 40px; }
    .brand span { font-size: 20px; font-weight: 700; color: #d2d2e8; }
    .plain { display: flex; padding: 0; border: 0; background: none; color: #d2d2e8; }
    .collapse { margin-left: 5px; color: #b9b9d0; }
    .tools { display: flex; gap: 20px; margin-left: auto; }

    .shell { display: grid; grid-template-columns: 260px minmax(0, 1fr); }
    .side { display: flex; align-items: flex-start; justify-content: space-between; }
    nav { width: 236px; padding-left: 12px; }
    .thumb { width: 4px; height: 760px; margin-right: 3px; border-radius: 2px; background: #46485f; }
    .item {
      display: flex; align-items: center; gap: 8px; height: 42px; margin-bottom: 6px; padding: 0 16px;
      border-radius: 8px; color: #d2d2e8; box-sizing: border-box; white-space: nowrap;
    }
    .item.hover { background: #30324a; }
    .item.active { background: #787eff; color: #fff; font-weight: 500; }
    .heading {
      display: flex; align-items: center; gap: 16px; margin: 32px 0 14px -12px;
      font-size: 12px; line-height: 24px; text-transform: uppercase; color: #72738d; font-weight: 400;
    }
    .heading::before { content: ""; width: 16px; height: 1px; background: #46485f; }

    main { padding: 24px 24px 0; }
    .panel {
      background: #30334e; border-radius: 10px; padding: 24px 20px 20px;
      box-shadow: 0 2px 10px rgba(20, 21, 33, 0.28);
    }
    .panel h1 { margin: 0; font-size: 20px; line-height: 24px; font-weight: 500; color: #d2d2e8; }
    .panel .lead { margin: 6px 0 0; font-size: 14px; line-height: 20px; color: #a0a1b8; }
    .actions { display: flex; justify-content: flex-end; padding: 19px 16px 24px 0; }
    .actions button {
      height: 38px; padding: 0 24px; border: 0; border-radius: 8px; background: #464963; color: #6a6b87;
      font-size: 14px; font-weight: 500; text-transform: uppercase;
    }
    .cards { display: grid; grid-template-columns: repeat(3, minmax(0, 1fr)); gap: 16px; }

    footer { margin-top: 40px; }
    .cols { display: grid; grid-template-columns: repeat(4, minmax(0, 1fr)); padding: 0 20px; }
    .links { border-top: 1px solid #41435b; border-bottom: 1px solid #41435b; padding-top: 20px; padding-bottom: 30px; }
    .group { display: flex; flex-direction: column; align-items: flex-start; gap: 8px; }
    .group a { padding-left: 16px; }
    .group .spaced { margin-top: 16px; }
    .group .next { margin-top: 8px; }
    .contact {
      height: 38px; width: 139px; margin-top: 12px; border: 1px solid #474ba8; border-radius: 8px; background: none;
      color: #666cff; font-size: 14px; font-weight: 500; text-transform: uppercase;
    }
    .iab { width: 116px; height: 112px; overflow: visible; }
    .policies { padding-top: 21px; row-gap: 24px; }
    .social { grid-column: 4; grid-row: 1; justify-self: end; margin: 16px 16px 0 0; height: 8px; color: #9a9ab4; }
    .social .icon { width: 32px; height: 32px; }
    .copy { text-align: center; margin: 40px 0 0; padding-bottom: 15px; }

    .chat {
      position: absolute; top: 326px; right: 8px; width: 230px; z-index: 5; overflow: hidden;
      border-radius: 12px; background: #242424; box-shadow: 0 2px 12px rgba(0, 0, 0, 0.3);
    }
    .wave { display: flex; height: 150px; background: #f0f0f0; padding-left: 54px; align-items: center; box-sizing: border-box; }
    .wave svg { width: 72px; height: 72px; margin-top: 10px; }
    .ask { display: flex; flex-direction: column; gap: 10px; padding: 14px 13px 8px; }
    .ask p { margin: 0 0 8px; padding: 0 1px; font-size: 14px; line-height: 19px; color: #fff; }
    .ask button { height: 36px; border: 0; border-radius: 6px; font-size: 14px; font-weight: 600; }
    .ask .yes { background: #787eff; color: #111126; }
    .ask .no { background: #2e2f33; color: #e2e2ff; }

    .consent {
      position: absolute; top: 645px; left: 0; right: 0; z-index: 6; box-sizing: border-box;
      display: flex; align-items: center; justify-content: space-between; gap: 24px;
      border: 1px solid #fff; background: #32344e; padding: 13px 33px 15px 24px;
      box-shadow: 0 8px 24px rgba(0, 0, 0, 0.5);
      font-family: "Liberation Sans", Arial, sans-serif;
    }
    .notice { flex: 0 1 794px; }
    .notice p { margin: 0; font-size: 13px; line-height: 20px; color: #fff; }
    .notice p a { color: #fff; text-decoration: underline; }
    .notice .purposes { margin-top: 12px; font-size: 12px; line-height: 19px; font-weight: 700; color: #507080; text-align: justify; }
    .notice .purposes strong { display: block; color: #2e2e38; }
    .choices { display: flex; gap: 10px; }
    .choices button { height: 49px; border: 0; font-size: 12px; font-weight: 700; white-space: nowrap; }
    .choices .deny { padding: 0 6px; border: 1px solid #c0c0c0; background: #eee; color: #444; }
    .choices .agree { width: 161px; background: #827cff; color: #fff; }
  `;

  private brand() {
    return html`<svg viewBox="0 0 40 40" aria-hidden="true">
      <circle cx="18" cy="22" r="14" fill="#d9d9d9" />
      <path d="M18 22V8A14 14 0 0 0 4 22ZM18 22V36A14 14 0 0 0 32 22Z" fill="#8c52ff" />
      <circle cx="18" cy="22" r="7" fill="#8c52ff" />
      <circle cx="18" cy="22" r="6" fill="none" stroke="#c9b2ff" stroke-width=".6" />
      <path d="M0 22H36M18 5V40" stroke="#c8c8d4" stroke-width="1" />
      <path d="M18 22L34 6" stroke="#d9d9d9" stroke-width="1" />
      <path d="M30 9L32 3L35 0L35 4L40 4L36 8Z" fill="#8c52ff" />
      <circle cx="18" cy="22" r="1.4" fill="#fff" />
    </svg>`;
  }

  private hand() {
    return html`<svg viewBox="0 0 72 72" role="img" aria-label="Waving hand">
      <defs>
        <radialGradient id="palm" cx=".62" cy=".6" r=".5">
          <stop stop-color="#ffb84d" /><stop offset=".6" stop-color="#ffc858" /><stop offset="1" stop-color="#ffd166" />
        </radialGradient>
      </defs>
      <g stroke="#ffd166" stroke-width="8.4" stroke-linecap="round" fill="none">
        <path d="M24 7L46 32" /><path d="M11 11L38 38" /><path d="M7 25L34 46" /><path d="M9 42L34 56" />
      </g>
      <path d="M46 27C48 31 52 28 53 24C54 17 55 11 63 11C68 11 69 15 66 19C64 24 65 32 66 40C68 53 62 65 50 70C42 72 36 70 28 63L14 51L33 42L35 34Z" fill="url(#palm)" />
      <g stroke="#f0a83c" stroke-width="1" stroke-linecap="round" fill="none">
        <path d="M20 15L38 33" /><path d="M12 24L33 40" /><path d="M10 37L28 49" />
      </g>
      <path d="M53 34C50 44 52 50 46 58" stroke="#ffb43c" stroke-width="4" stroke-linecap="round" fill="none" opacity=".5" />
    </svg>`;
  }

  private iab() {
    return html`<svg class="iab" viewBox="0 0 116 112" role="img" aria-label="iab member">
      <text x="0" y="111" font-family="Inter, sans-serif" font-weight="900" font-size="62" fill="#fff" style="font-feature-settings:'cv11'">iab</text>
      <circle cx="104" cy="104" r="7" fill="#fff" />
      <text transform="translate(111 93) rotate(-90)" font-family="Roboto, sans-serif" font-weight="500" font-size="24" fill="#fff">member</text>
    </svg>`;
  }

  render() {
    return html`
      <header class="topbar">
        <div class="brand">${this.brand()}<span>Curated.Media</span></div>
        <button class="plain collapse" aria-label="Collapse menu">${icon("chevrons")}</button>
        <div class="tools">
          <button class="plain" aria-label="Language">${icon("translate")}</button>
          <button class="plain" aria-label="Theme">${icon("sun")}</button>
        </div>
      </header>

      <div class="shell">
        <aside class="side">
          <nav aria-label="Main">
            ${NAV.map(
              (s) => html`
                ${s.heading ? html`<div class="heading">${s.heading}</div>` : ""}
                ${s.items.map(
                  (i) => html`<a href="#" class=${classMap({ item: true, hover: i.state === "hover", active: i.state === "active" })}
                    >${icon(i.icon)}<span>${i.label}</span></a>`,
                )}
              `,
            )}
          </nav>
          <div class="thumb"></div>
        </aside>

        <main>
          <section class="panel">
            <h1>CTV inventory leaning towards a specific context or genre</h1>
            <p class="lead">We consistently curate additional publishers and genres, feel free to submit a PMP Request if unavailable</p>
            <div class="actions"><button disabled>Get these PMPs</button></div>
            <div class="cards">${PACKS.map((p) => html`<package-card .pack=${p}></package-card>`)}</div>
          </section>

          <footer>
            <div class="cols links">
              <div class="group">
                <span>PMP Libraries</span>
                ${["Audience", "Contextual", "CTV Packages", "Domain Scoring", "Performance", "Sensitive Categories"].map(
                  (l) => html`<a href="#">${l}</a>`,
                )}
              </div>
              <div class="group">
                <span>Custom Curation</span>
                <a class="spaced" href="#">Campaign Audit</a>
                <a href="#">Custom PMP</a>
                <span class="next">Closed-Loop Optimization</span>
                <a class="spaced" href="#">Upload DSP Reporting</a>
              </div>
              <div class="group">
                <span>Support</span>
                <a class="spaced" href="#">Book a Demo</a>
                <a href="#">Documentation</a>
                <a href="#">Live Chat</a>
                <a href="#">System Status</a>
              </div>
              <div class="group">
                <span>See what our platform can do for you.</span>
                <button class="contact">Contact us</button>
                ${this.iab()}
              </div>
            </div>
            <div class="cols policies">
              <a href="#">Website Privacy Policy</a>
              <a href="#">Services Privacy Policy</a>
              <a href="#">Consumer Access Request</a>
              <a class="social" href="#" aria-label="LinkedIn">${icon("linkedin")}</a>
              <a href="#">Terms of Service</a>
              <a href="#">Do Not Share or Sell My Personal Information</a>
              <a href="#">Opt-Out</a>
            </div>
            <p class="copy">©2025 <a href="#">Curated.Media</a>: Supply Side Trader®</p>
          </footer>
        </main>
      </div>

      <aside class="chat" aria-label="Chat">
        <div class="wave">${this.hand()}</div>
        <div class="ask">
          <p>Hi, let us know if you have any questions.</p>
          <button class="yes">Chat now</button>
          <button class="no">Just browsing</button>
        </div>
      </aside>

      <section class="consent" aria-label="Privacy choices">
        <div class="notice">
          <p>
            We collect some sensitive and not sensitive personal data like your ip address or the browser's cookies and we share or
            sell it to third parties. This also helps us in keeping our service operative, improving our products and delivering
            personalized ads. You can choose to opt-out from the share and from the sale of the data by using the options below.
            Please visit our <a href="#">Privacy Policy</a> for more information about your rights.
          </p>
          <div class="purposes">
            <strong>We and our partners process data for the following purposes</strong>
            Actively scan device characteristics for identification (IAB TCF v2.2), Create profiles for personalised advertising (IAB
            TCF v2.2), Create profiles to personalise content (IAB TCF v2.2), Develop and improve services (IAB TCF v2.2), Measure
            advertising performance (IAB TCF v2.2), Measure content performance (IAB TCF v2.2), Store and/or access information
            (cookies and others) on a device (IAB TCF v2.2), Understand audiences through statistics or combinations of data from
            different sources (IAB TCF v2.2), Use limited data to select advertising (IAB TCF v2.2), Use limited data to select
            content (IAB TCF v2.2), Use precise geolocation data (IAB TCF v2.2), Use profiles to select personalised advertising
            (IAB TCF v2.2), Use profiles to select personalised content (IAB TCF v2.2)
          </div>
        </div>
        <div class="choices">
          <button class="deny">Do Not Share, Sell or Opt-out of My Personal Information</button>
          <button class="agree">Agree and Close</button>
        </div>
      </section>
    `;
  }
}
